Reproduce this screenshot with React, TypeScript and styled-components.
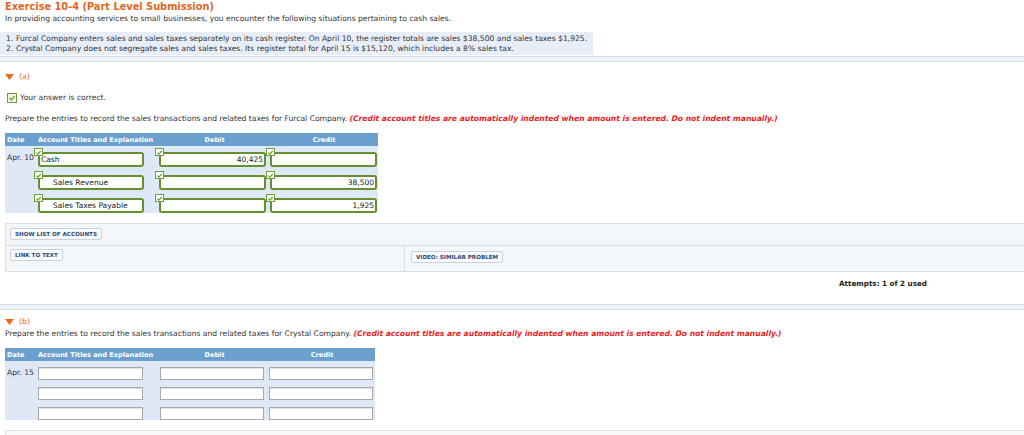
import styled, { createGlobalStyle } from 'styled-components';

const GlobalStyle = createGlobalStyle`
    body {
        margin: 0;
        background: #ffffff;
        font-family: "DejaVu Sans", Verdana, sans-serif;
        color: #333333;
    }
`

const Page = styled.div`
    width: 1024px;
    height: 435px;
    overflow: hidden;
`

const Header = styled.div`
    padding: 2px 0 0 5px;
`

const Title = styled.div`
    color: #e2661f;
    font-weight: bold;
    font-size: 9.8px;
    line-height: 10px;
`

const Text = styled.p`
    margin: 2px 0 0;
    font-size: 7.6px;
    line-height: 10px;
`

const ProblemList = styled.ol`
    margin: 8px 0 0 -5px;
    padding: 2px 0 1px 0;
    width: 593px;
    background: #e8eef8;
    list-style: none;
    font-size: 7.6px;
    line-height: 10px;
`

const ProblemItem = styled.li`
    display: flex;
`

const ItemNumber = styled.span`
    width: 16px;
    padding-left: 6px;
    box-sizing: border-box;
    flex: none;
`

const Separator = styled.div`
    margin-top: 1px;
    height: 4px;
    background: #eef2f8;
    border-top: 1px solid #d6dde7;
    border-bottom: 1px solid #d6dde7;
`

const Section = styled.div<{ $top: number }>`
    padding: ${p => p.$top}px 0 0 5px;
`

const Toggle = styled.div`
    display: flex;
    align-items: center;
    gap: 5px;
    height: 10px;
    color: #e2661f;
    font-size: 7.8px;
    line-height: 10px;
`

const Correct = styled.div`
    display: flex;
    align-items: center;
    gap: 3px;
    margin: 11px 0 0 2px;
    font-size: 7.6px;
    line-height: 10px;
`

const CheckBox = styled.span`
    width: 10px;
    height: 10px;
    box-sizing: border-box;
    border: 1px solid #6f9d3a;
    background: #eef6e4;
    display: flex;
    align-items: center;
    justify-content: center;
`

const Prompt = styled.p<{ $top: number }>`
    margin: ${p => p.$top}px 0 0;
    font-size: 7.6px;
    line-height: 10px;
`

const Note = styled.span`
    color: #ee1c25;
    font-weight: bold;
    font-style: italic;
`

const Journal = styled.div`
    margin-top: 9px;
    width: fit-content;
`

const HeadRow = styled.div`
    display: flex;
    height: 13px;
    align-items: center;
    background: #6b9fcd;
    color: #ffffff;
    font-weight: bold;
    font-size: 6.6px;
`

const HeadCell = styled.div<{ $w: number; $center?: boolean; $pad?: number }>`
    width: ${p => p.$w}px;
    padding-left: ${p => p.$pad ?? 0}px;
    text-align: ${p => (p.$center ? 'center' : 'left')};
    box-sizing: border-box;
`

const Body = styled.div<{ $gap: number }>`
    background: #dee8f7;
    padding: 6px 0 0;
    display: flex;
    flex-direction: column;
    gap: ${p => p.$gap}px;
`

const Row = styled.div`
    display: flex;
`

const DateCell = styled.div<{ $w: number }>`
    width: ${p => p.$w}px;
    padding: 1px 0 0 2px;
    box-sizing: border-box;
    font-size: 7.6px;
    line-height: 10px;
`

const Slot = styled.div<{ $w: number }>`
    width: ${p => p.$w}px;
`

const Field = styled.div<{ $w: number; $graded: boolean; $right?: boolean; $indent?: boolean }>`
    position: relative;
    width: ${p => p.$w}px;
    height: ${p => (p.$graded ? 15 : 13)}px;
    box-sizing: border-box;
    background: #ffffff;
    border: ${p => (p.$graded ? '2px solid #64912d' : '1px solid #a8a8a8')};
    border-radius: ${p => (p.$graded ? 3 : 0)}px;
    box-shadow: ${p => (p.$graded ? 'none' : 'inset 0 1px 0 #e2e2e2')};
    display: flex;
    align-items: center;
    justify-content: ${p => (p.$right ? 'flex-end' : 'flex-start')};
    padding: 0 ${p => (p.$indent ? 2 : 1)}px 0 ${p => (p.$indent ? 13 : 1)}px;
    font-size: 7.5px;
    color: #222222;
`

const Badge = styled.span`
    position: absolute;
    left: -6px;
    top: -6px;
    width: 9px;
    height: 8px;
    box-sizing: border-box;
    border: 1px solid #6f9d3a;
    background: #ffffff;
    display: flex;
    align-items: center;
    justify-content: center;
`

const Panel = styled.div<{ $top: number }>`
    margin: ${p => p.$top}px 0 0 5px;
    background: #f4f7fa;
    border-top: 1px solid #d8dfe8;
    border-left: 1px solid #d8dfe8;
    border-bottom: 1px solid #d8dfe8;
`

const PanelRow = styled.div<{ $line?: boolean }>`
    display: flex;
    border-top: ${p => (p.$line ? '1px solid #d8dfe8' : 'none')};
`

const PanelCell = styled.div<{ $w?: number; $pad: string; $line?: boolean }>`
    display: flex;
    align-items: flex-start;
    width: ${p => (p.$w ? `${p.$w}px` : 'auto')};
    flex: ${p => (p.$w ? 'none' : '1')};
    padding: ${p => p.$pad};
    border-left: ${p => (p.$line ? '1px solid #d8dfe8' : 'none')};
    box-sizing: border-box;
`

const ToolButton = styled.button`
    height: 12px;
    padding: 0 4px;
    background: #f9fafc;
    border: 1px solid #c8d1dd;
    border-radius: 2px;
    color: #2a4878;
    font-family: "DejaVu Sans", Verdana, sans-serif;
    font-weight: bold;
    font-size: 5.6px;
    line-height: 10px;
    cursor: pointer;
`

const Attempts = styled.div`
    height: 31px;
    box-sizing: border-box;
    padding: 0 97px 8px 0;
    display: flex;
    align-items: center;
    justify-content: flex-end;
    font-weight: bold;
    font-size: 7.2px;
    color: #222222;
`

const Footer = styled.div`
    margin: 10px 0 0 5px;
    height: 20px;
    background: #f7f9fb;
    border-top: 1px solid #dfe4ea;
    border-left: 1px solid #dfe4ea;
`

function Tick({ size }: { size: number }) {
    return (
        <svg width={size} height={size} viewBox="0 0 10 10">
            <path d="M2 5.2 L4.2 7.3 L8.2 2.8" fill="none" stroke="#5f9a24" strokeWidth="1.6" />
        </svg>
    )
}

function Caret() {
    return (
        <svg width="9" height="6" viewBox="0 0 9 6">
            <path d="M0 0 H9 L4.5 6 Z" fill="#f06a1c" />
        </svg>
    )
}

type Line = { account: string; debit: string; credit: string; indent?: boolean }

type Layout = { cols: number[]; fields: number[]; gap: number }

const gradedLayout: Layout = { cols: [33, 121, 111, 108], fields: [106, 107, 107], gap: 8 }
const blankLayout: Layout = { cols: [33, 122, 109, 106], fields: [105, 104, 104], gap: 7 }

const furcal: Line[] = [
    { account: 'Cash', debit: '40,425', credit: '' },
    { account: 'Sales Revenue', debit: '', credit: '38,500', indent: true },
    { account: 'Sales Taxes Payable', debit: '', credit: '1,925', indent: true },
]

const crystal: Line[] = [
    { account: '', debit: '', credit: '' },
    { account: '', debit: '', credit: '' },
    { account: '', debit: '', credit: '' },
]

function JournalTable({ date, lines, graded, layout }: { date: string; lines: Line[]; graded: boolean; layout: Layout }) {
    const { cols, fields } = layout
    return (
        <Journal>
            <HeadRow>
                <HeadCell $w={cols[0]} $pad={2}>Date</HeadCell>
                <HeadCell $w={cols[1]}>Account Titles and Explanation</HeadCell>
                <HeadCell $w={cols[2]} $center>Debit</HeadCell>
                <HeadCell $w={cols[3]} $center>Credit</HeadCell>
            </HeadRow>
            <Body $gap={layout.gap}>
                {lines.map((line, i) => (
                    <Row key={i}>
                        <DateCell $w={cols[0]}>{i === 0 ? date : ''}</DateCell>
                        <Slot $w={cols[1]}>
                            <Field $w={fields[0]} $graded={graded} $indent={line.indent}>
                                {graded && <Badge><Tick size={7} /></Badge>}
                                {line.account}
                            </Field>
                        </Slot>
                        <Slot $w={cols[2]}>
                            <Field $w={fields[1]} $graded={graded} $right>
                                {graded && <Badge><Tick size={7} /></Badge>}
                                {line.debit}
                            </Field>
                        </Slot>
                        <Slot $w={cols[3]}>
                            <Field $w={fields[2]} $graded={graded} $right>
                                {graded && <Badge><Tick size={7} /></Badge>}
                                {line.credit}
                            </Field>
                        </Slot>
                    </Row>
                ))}
            </Body>
        </Journal>
    )
}

const note = '(Credit account titles are automatically indented when amount is entered. Do not indent manually.)'

export default function App() {
    return (
        <Page>
            <GlobalStyle />
            <Header>
                <Title>Exercise 10-4 (Part Level Submission)</Title>
                <Text>In providing accounting services to small businesses, you encounter the following situations pertaining to cash sales.</Text>
                <ProblemList>
                    <ProblemItem>
                        <ItemNumber>1.</ItemNumber>
                        Furcal Company enters sales and sales taxes separately on its cash register. On April 10, the register totals are sales $38,500 and sales taxes $1,925.
                    </ProblemItem>
                    <ProblemItem>
                        <ItemNumber>2.</ItemNumber>
                        Crystal Company does not segregate sales and sales taxes. Its register total for April 15 is $15,120, which includes a 8% sales tax.
                    </ProblemItem>
                </ProblemList>
            </Header>
            <Separator />

            <Section $top={10}>
                <Toggle><Caret />(a)</Toggle>
                <Correct>
                    <CheckBox><Tick size={8} /></CheckBox>
                    Your answer is correct.
                </Correct>
                <Prompt $top={11}>
                    Prepare the entries to record the sales transactions and related taxes for Furcal Company. <Note>{note}</Note>
                </Prompt>
                <JournalTable date="Apr. 10" lines={furcal} graded layout={gradedLayout} />
            </Section>

            <Panel $top={10}>
                <PanelRow>
                    <PanelCell $pad="4px 4px 5px">
                        <ToolButton>SHOW LIST OF ACCOUNTS</ToolButton>
                    </PanelCell>
                </PanelRow>
                <PanelRow $line>
                    <PanelCell $w={398} $pad="3px 4px 10px">
                        <ToolButton>LINK TO TEXT</ToolButton>
                    </PanelCell>
                    <PanelCell $pad="5px 6px 8px" $line>
                        <ToolButton>VIDEO: SIMILAR PROBLEM</ToolButton>
                    </PanelCell>
                </PanelRow>
            </Panel>
            <Attempts>Attempts: 1 of 2 used</Attempts>
            <Separator />

            <Section $top={7}>
                <Toggle><Caret />(b)</Toggle>
                <Prompt $top={2}>
                    Prepare the entries to record the sales transactions and related taxes for Crystal Company. <Note>{note}</Note>
                </Prompt>
                <JournalTable date="Apr. 15" lines={crystal} graded={false} layout={blankLayout} />
            </Section>
            <Footer />
        </Page>
    )
}
